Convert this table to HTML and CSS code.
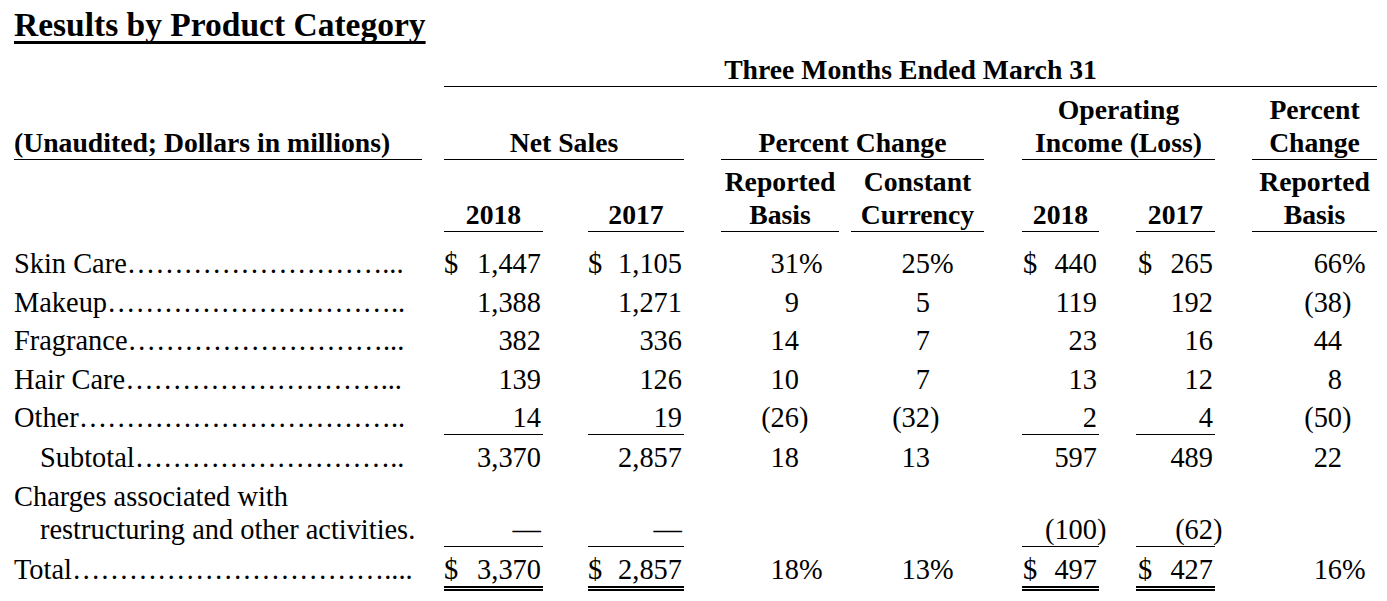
FILE: index.html
```html
<!DOCTYPE html>
<html lang="en">
<head>
<meta charset="utf-8">
<title>Results by Product Category</title>
<link rel="stylesheet" href="styles.css">
</head>
<body>
<div class="page">
  <h1 class="title">Results by Product Category</h1>
  <table class="fin">
    <colgroup>
      <col class="w-lbl"><col class="w-g1"><col class="w-ns18"><col class="w-g2"><col class="w-ns17"><col class="w-g3"><col class="w-rep"><col class="w-g4"><col class="w-cc"><col class="w-g5"><col class="w-oi18"><col class="w-g6"><col class="w-oi17"><col class="w-g7"><col class="w-pc">
    </colgroup>
    <thead>
      <tr class="h1r">
        <th></th><th></th>
        <th colspan="13" class="b">Three Months Ended March 31</th>
      </tr>
      <tr class="h2r">
        <th class="hl b">(Unaudited; Dollars in millions)</th><th></th>
        <th colspan="3" class="b">Net Sales</th><th></th>
        <th colspan="3" class="b">Percent Change</th><th></th>
        <th colspan="3" class="b">Operating<br>Income (Loss)</th><th></th>
        <th class="b">Percent<br>Change</th>
      </tr>
      <tr class="h3r">
        <th></th><th></th>
        <th class="b">2018</th><th></th>
        <th class="b">2017</th><th></th>
        <th class="b">Reported<br>Basis</th><th></th>
        <th class="b">Constant<br>Currency</th><th></th>
        <th class="b">2018</th><th></th>
        <th class="b">2017</th><th></th>
        <th class="b">Reported<br>Basis</th>
      </tr>
    </thead>
    <tbody>
      <tr class="r-first">
        <td class="lbl">Skin Care&hellip;&hellip;&hellip;&hellip;&hellip;&hellip;&hellip;&hellip;&hellip;...</td><td></td>
        <td class="n"><span class="cur">$</span>1,447</td><td></td>
        <td class="n"><span class="cur">$</span>1,105</td><td></td>
        <td class="rp">31<span class="h">%</span></td><td></td>
        <td class="cc">25<span class="h">%</span></td><td></td>
        <td class="n"><span class="cur c1">$</span>440</td><td></td>
        <td class="n"><span class="cur c2">$</span>265</td><td></td>
        <td class="pc">66<span class="h">%</span></td>
      </tr>
      <tr>
        <td class="lbl">Makeup&hellip;&hellip;&hellip;&hellip;&hellip;&hellip;&hellip;&hellip;&hellip;&hellip;..</td><td></td>
        <td class="n">1,388</td><td></td>
        <td class="n">1,271</td><td></td>
        <td class="rp">9</td><td></td>
        <td class="cc">5</td><td></td>
        <td class="n">119</td><td></td>
        <td class="n">192</td><td></td>
        <td class="pc">(38<span class="h">)</span></td>
      </tr>
      <tr>
        <td class="lbl">Fragrance&hellip;&hellip;&hellip;&hellip;&hellip;&hellip;&hellip;&hellip;&hellip;...</td><td></td>
        <td class="n">382</td><td></td>
        <td class="n">336</td><td></td>
        <td class="rp">14</td><td></td>
        <td class="cc">7</td><td></td>
        <td class="n">23</td><td></td>
        <td class="n">16</td><td></td>
        <td class="pc">44</td>
      </tr>
      <tr>
        <td class="lbl">Hair Care&hellip;&hellip;&hellip;&hellip;&hellip;&hellip;&hellip;&hellip;&hellip;...</td><td></td>
        <td class="n">139</td><td></td>
        <td class="n">126</td><td></td>
        <td class="rp">10</td><td></td>
        <td class="cc">7</td><td></td>
        <td class="n">13</td><td></td>
        <td class="n">12</td><td></td>
        <td class="pc">8</td>
      </tr>
      <tr>
        <td class="lbl">Other&hellip;&hellip;&hellip;&hellip;&hellip;&hellip;&hellip;&hellip;&hellip;&hellip;&hellip;..</td><td></td>
        <td class="n u">14</td><td></td>
        <td class="n u">19</td><td></td>
        <td class="rp">(26<span class="h">)</span></td><td></td>
        <td class="cc">(32<span class="h">)</span></td><td></td>
        <td class="n u">2</td><td></td>
        <td class="n u">4</td><td></td>
        <td class="pc">(50<span class="h">)</span></td>
      </tr>
      <tr class="r-sub">
        <td class="lbl ind">Subtotal&hellip;&hellip;&hellip;&hellip;&hellip;&hellip;&hellip;&hellip;&hellip;..</td><td></td>
        <td class="n">3,370</td><td></td>
        <td class="n">2,857</td><td></td>
        <td class="rp">18</td><td></td>
        <td class="cc">13</td><td></td>
        <td class="n">597</td><td></td>
        <td class="n">489</td><td></td>
        <td class="pc">22</td>
      </tr>
      <tr class="r-chg">
        <td class="lbl hang">Charges associated with<br>restructuring and other activities.</td><td></td>
        <td class="n u">—</td><td></td>
        <td class="n u">—</td><td></td>
        <td class="rp"></td><td></td>
        <td class="cc"></td><td></td>
        <td class="n u">(100<span class="h">)</span></td><td></td>
        <td class="n u">(62<span class="h">)</span></td><td></td>
        <td class="pc"></td>
      </tr>
      <tr class="r-tot">
        <td class="lbl">Total&hellip;&hellip;&hellip;&hellip;&hellip;&hellip;&hellip;&hellip;&hellip;&hellip;&hellip;....</td><td></td>
        <td class="n dbl"><span class="cur">$</span>3,370</td><td></td>
        <td class="n dbl"><span class="cur">$</span>2,857</td><td></td>
        <td class="rp">18<span class="h">%</span></td><td></td>
        <td class="cc">13<span class="h">%</span></td><td></td>
        <td class="n dbl"><span class="cur c1">$</span>497</td><td></td>
        <td class="n dbl"><span class="cur c2">$</span>427</td><td></td>
        <td class="pc">16<span class="h">%</span></td>
      </tr>
    </tbody>
  </table>
</div>
</body>
</html>
```

FILE: styles.css
```css
html, body {
  margin: 0;
  padding: 0;
  background: #ffffff;
  color: #000000;
}

.page {
  padding: 6px 0 0 14px;
  font-family: "Liberation Serif", "Times New Roman", serif;
}

.title {
  margin: 0;
  font-size: 33.5px;
  line-height: 38px;
  font-weight: bold;
  text-decoration: underline;
  text-decoration-thickness: 3px;
  text-underline-offset: 5px;
  text-decoration-skip-ink: none;
}

.fin {
  table-layout: fixed;
  width: 1363px;
  border-collapse: separate;
  border-spacing: 0;
}

.w-lbl { width: 408px; }
.w-g1 { width: 22px; }
.w-ns18 { width: 99px; }
.w-g2 { width: 45px; }
.w-ns17 { width: 96px; }
.w-g3 { width: 37px; }
.w-rep { width: 118px; }
.w-g4 { width: 12px; }
.w-cc { width: 133px; }
.w-g5 { width: 38px; }
.w-oi18 { width: 77px; }
.w-g6 { width: 37px; }
.w-oi17 { width: 79px; }
.w-g7 { width: 37px; }
.w-pc { width: 125px; }

/* header */
.fin th {
  font-size: 27.7px;
  line-height: 33px;
  font-weight: bold;
  text-align: center;
  vertical-align: bottom;
  padding: 0;
  white-space: nowrap;
  border-bottom: 1px solid transparent;
}
.fin th.b { border-bottom-color: #000; }
.fin th.hl { text-align: left; }

.h1r th { padding-top: 9px; }
.h2r th { padding-top: 6px; }
.h3r th { padding-top: 5px; }

/* body */
.fin td {
  font-size: 28.4px;
  line-height: 33px;
  vertical-align: bottom;
  padding: 4.5px 0 0 0;
  white-space: nowrap;
  border-bottom: 1px solid transparent;
}

.r-first td { padding-top: 15px; }
.r-sub td { padding-top: 5.5px; }
.r-chg td { padding-top: 5.5px; }
.r-tot td {
  padding-top: 6px;
  border-bottom: 5px double transparent;
}

.fin td.u { border-bottom-color: #000; }
.fin td.dbl { border-bottom-color: #000; }

.lbl { text-align: left; }
.ind { padding-left: 26px !important; }
.hang {
  padding-left: 26px !important;
  text-indent: -26px;
}

.n {
  text-align: right;
  padding-right: 2px !important;
}
.rp {
  text-align: right;
  padding-right: 40px !important;
}
.cc {
  text-align: right;
  padding-right: 54px !important;
}
.pc {
  text-align: right;
  padding-right: 35px !important;
}

.cur { float: left; }
.cur.c1 { margin-left: 1px; }
.cur.c2 { margin-left: 2px; }

.h {
  display: inline-block;
  width: 0;
  text-align: left;
}
```
